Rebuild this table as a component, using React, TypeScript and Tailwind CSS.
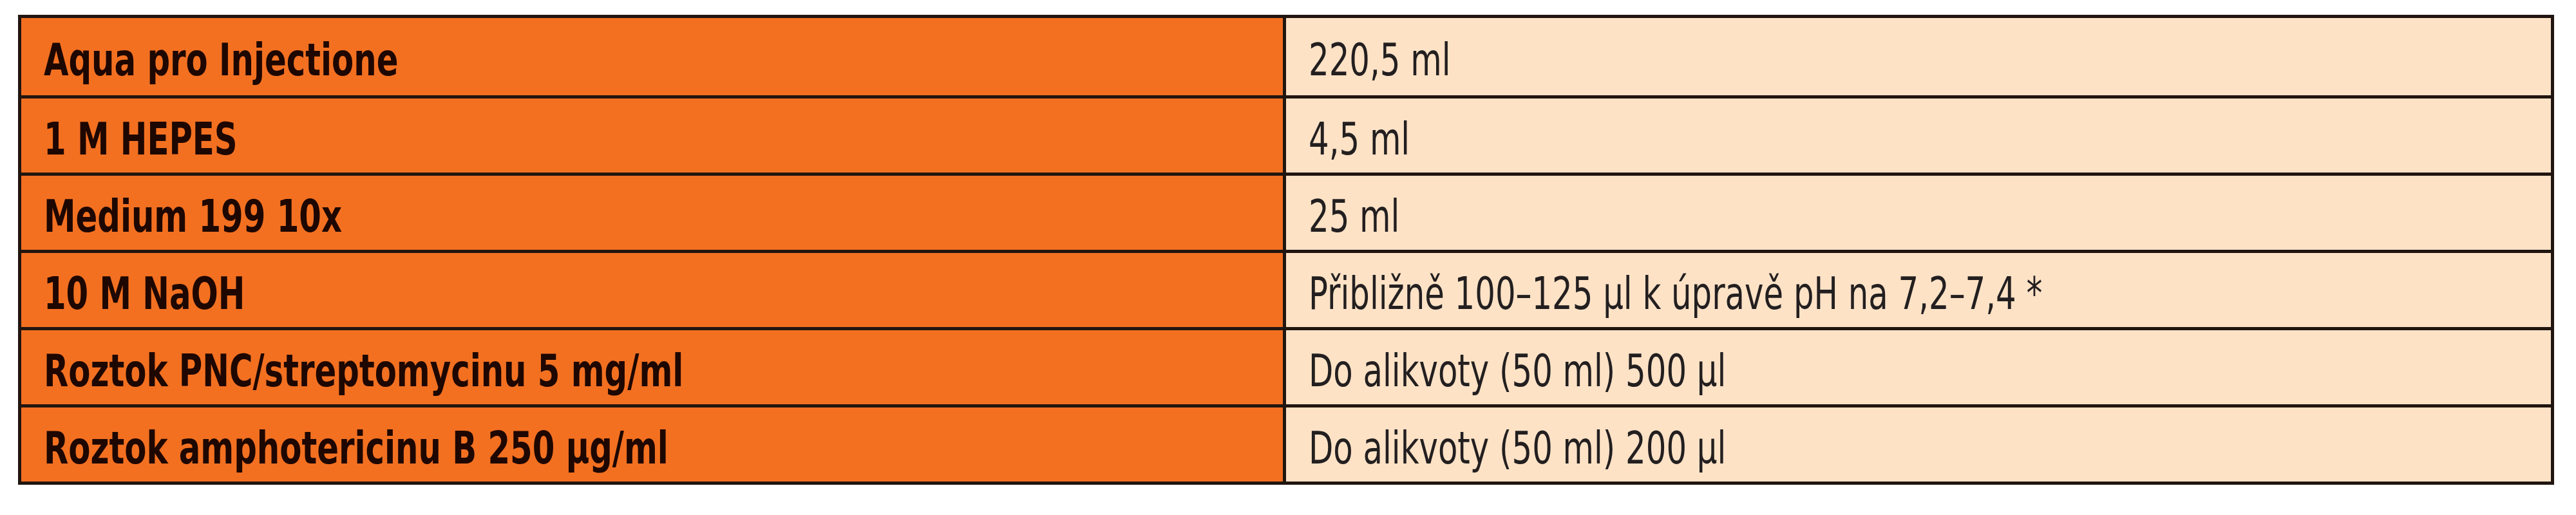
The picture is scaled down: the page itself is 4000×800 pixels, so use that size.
const rows: [string, string][] = [
  ['Aqua pro Injectione', '220,5 ml'],
  ['1 M HEPES', '4,5 ml'],
  ['Medium 199 10x', '25 ml'],
  ['10 M NaOH', 'Přibližně 100–125 µl k úpravě pH na 7,2–7,4 *'],
  ['Roztok PNC/streptomycinu 5 mg/ml', 'Do alikvoty (50 ml) 500 µl'],
  ['Roztok amphotericinu B 250 µg/ml', 'Do alikvoty (50 ml) 200 µl'],
];

export default function App() {
  return (
    <div className="w-[4000px] h-[800px] bg-white pt-[23px] pl-[28px] font-['DejaVu_Sans',sans-serif] font-stretch-condensed">
      <div className="w-[3938px] border-[5px] border-[#211510]">
        {rows.map(([name, amount], i) => (
          <div
            key={name}
            className={`grid grid-cols-[1959px_5px_1fr] h-[120px] ${i > 0 ? 'border-t-[5px] border-[#211510]' : ''}`}
          >
            {/* Component */}
            <div className="bg-[#f37021] flex items-center pl-[35px] pt-[10px] text-[70px] font-bold text-[#1e0700] leading-none">
              <span className="inline-block whitespace-nowrap origin-left scale-x-[0.79]">{name}</span>
            </div>
            <div className="bg-[#211510]" />
            {/* Amount */}
            <div className="bg-[#fde2c6] flex items-center pl-[35px] pt-[10px] text-[70px] text-[#231f20] leading-none">
              <span className="inline-block whitespace-nowrap origin-left scale-x-[0.79]">{amount}</span>
            </div>
          </div>
        ))}
      </div>
    </div>
  );
}
